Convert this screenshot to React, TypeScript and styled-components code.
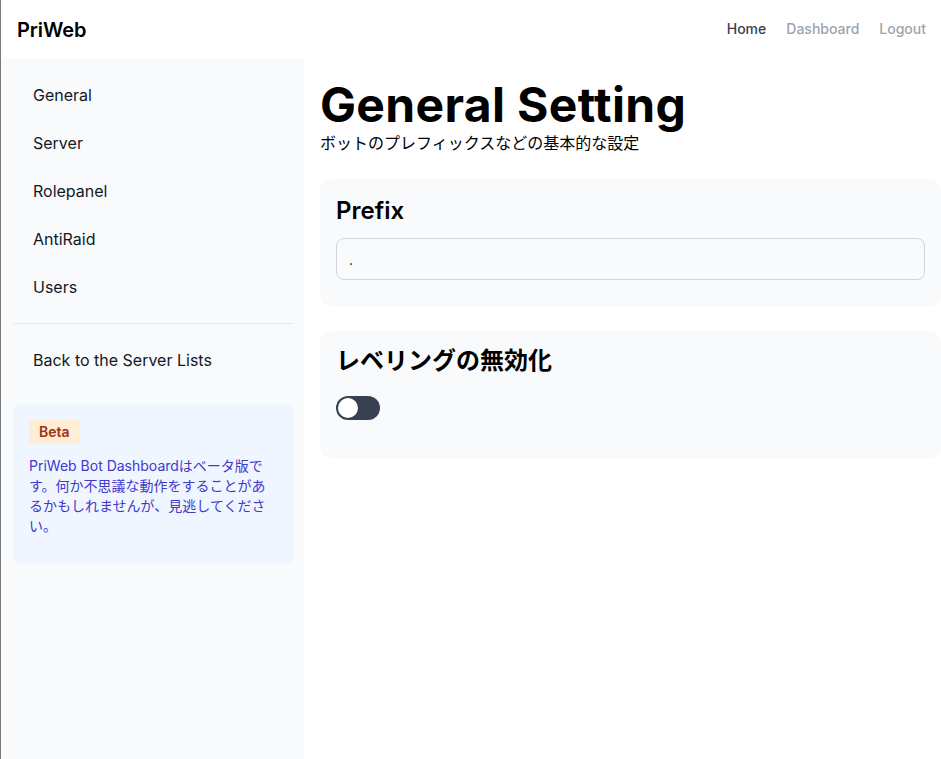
import React, { useState } from "react";
import styled, { createGlobalStyle } from "styled-components";

const GlobalStyle = createGlobalStyle`
  * { box-sizing: border-box; }
  html, body { margin: 0; padding: 0; background: #ffffff; }
  body {
    font-family: Inter, "Noto Sans CJK JP", sans-serif;
    color: #111827;
  }
`;

const Page = styled.div`
  min-height: 100vh;
  display: flex;
  flex-direction: column;
  border-left: 1px solid #7a7a7a;
`;

const Header = styled.header`
  height: 59px;
  display: flex;
  align-items: center;
  justify-content: space-between;
  padding: 0 15px 0 16px;
  background: #ffffff;
`;

const Brand = styled.div`
  font-size: 20px;
  font-weight: 600;
  color: #000000;
  letter-spacing: -0.1px;
`;

const Nav = styled.nav`
  display: flex;
  gap: 20px;
  margin-top: -2px;
`;

const NavLink = styled.a<{ $active?: boolean }>`
  font-size: 14px;
  font-weight: 500;
  text-decoration: none;
  color: ${(p) => (p.$active ? "#374151" : "#9ca3af")};
  cursor: pointer;
`;

const Body = styled.div`
  flex: 1;
  display: flex;
`;

const Sidebar = styled.aside`
  width: 303px;
  flex-shrink: 0;
  background: #f9fafb;
  padding: 12px 11px 0 12px;
  display: flex;
  flex-direction: column;
`;

const MenuItem = styled.a`
  display: flex;
  align-items: center;
  height: 48px;
  padding: 0 20px;
  font-size: 16px;
  color: #111827;
  text-decoration: none;
  cursor: pointer;
`;

const Divider = styled.hr`
  border: none;
  border-top: 1px solid #e5e7eb;
  margin: 12px 0 12px 0;
`;

const BetaCard = styled.div`
  margin-top: 20px;
  background: #eff6ff;
  border-radius: 8px;
  padding: 16px 16px 28px 16px;
`;

const Badge = styled.span`
  display: inline-block;
  background: #ffedd5;
  color: #9a3412;
  font-size: 14px;
  font-weight: 600;
  border-radius: 4px;
  padding: 2px 10px;
  line-height: 20px;
`;

const BetaText = styled.p`
  margin: 12px 0 0 0;
  font-size: 14px;
  line-height: 20px;
  color: #4338ca;
`;

const Main = styled.main`
  flex: 1;
  padding: 22px 0 16px 16px;
  display: flex;
  flex-direction: column;
`;

const Title = styled.h1`
  margin: 0;
  font-size: 48px;
  line-height: 48px;
  font-weight: 700;
  color: #000000;
  letter-spacing: 0.35px;
`;

const Subtitle = styled.p`
  margin: 2px 0 0 0;
  font-size: 16px;
  line-height: 24px;
  color: #000000;
`;

const Card = styled.section<{ $padTop?: number; $padBottom?: number }>`
  margin-top: 24px;
  background: #f9fafb;
  border-radius: 12px;
  padding: ${(p) => p.$padTop ?? 16}px 16px ${(p) => p.$padBottom ?? 27}px 16px;
`;

const CardTitle = styled.h2<{ $weight?: number }>`
  margin: 0;
  font-size: 24px;
  line-height: 32px;
  font-weight: ${(p) => p.$weight ?? 600};
  color: #000000;
`;

const Input = styled.input`
  display: block;
  width: 100%;
  margin-top: 11px;
  height: 42px;
  padding: 0 12px;
  border: 1px solid #d1d5db;
  border-radius: 8px;
  background: #f9fafb;
  font-family: Inter, sans-serif;
  font-size: 14px;
  color: #111827;
  outline: none;
`;

const SwitchTrack = styled.button<{ $on: boolean }>`
  margin-top: 19px;
  margin-bottom: 11px;
  width: 44px;
  height: 24px;
  border-radius: 12px;
  border: none;
  padding: 2px;
  background: ${(p) => (p.$on ? "#2563eb" : "#374151")};
  display: flex;
  justify-content: ${(p) => (p.$on ? "flex-end" : "flex-start")};
  cursor: pointer;
`;

const SwitchKnob = styled.span`
  width: 20px;
  height: 20px;
  border-radius: 50%;
  background: #ffffff;
`;

export default function App() {
  const [on, setOn] = useState(false);
  const menu = ["General", "Server", "Rolepanel", "AntiRaid", "Users"];
  return (
    <Page>
      <GlobalStyle />
      <Header>
        <Brand>PriWeb</Brand>
        <Nav>
          <NavLink $active>Home</NavLink>
          <NavLink>Dashboard</NavLink>
          <NavLink>Logout</NavLink>
        </Nav>
      </Header>
      <Body>
        <Sidebar>
          {menu.map((m) => (
            <MenuItem key={m}>{m}</MenuItem>
          ))}
          <Divider />
          <MenuItem>Back to the Server Lists</MenuItem>
          <BetaCard>
            <Badge>Beta</Badge>
            <BetaText>
              PriWeb Bot Dashboardはベータ版です。何か不思議な動作をすることがあるかもしれませんが、見逃してください。
            </BetaText>
          </BetaCard>
        </Sidebar>
        <Main>
          <Title>General Setting</Title>
          <Subtitle>ボットのプレフィックスなどの基本的な設定</Subtitle>
          <Card>
            <CardTitle>Prefix</CardTitle>
            <Input defaultValue="." />
          </Card>
          <Card $padTop={14} $padBottom={28}>
            <CardTitle $weight={700}>レベリングの無効化</CardTitle>
            <SwitchTrack $on={on} onClick={() => setOn(!on)}>
              <SwitchKnob />
            </SwitchTrack>
          </Card>
        </Main>
      </Body>
    </Page>
  );
}
